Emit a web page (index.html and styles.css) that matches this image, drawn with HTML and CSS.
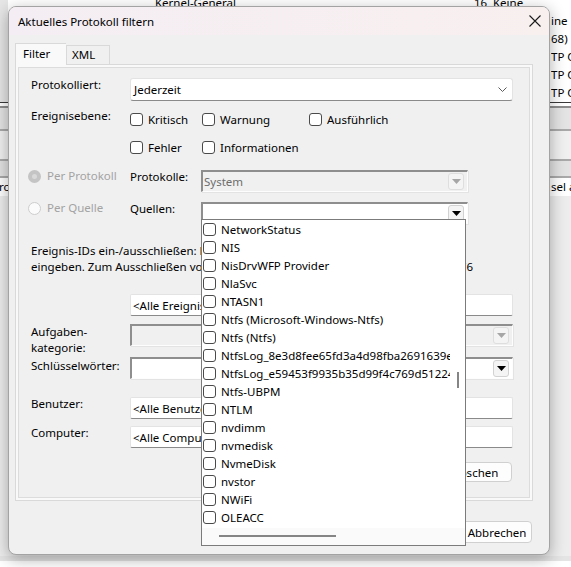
FILE: index.html
```html
<!DOCTYPE html>
<html lang="de">

<head>
    <meta charset="UTF-8" />
    <title>Aktuelles Protokoll filtern</title>
    <link rel="stylesheet" href="styles.css">
</head>

<body>
    <!-- Event viewer window behind the dialog -->
    <div class="backdrop">
        <div class="bg-events">
            <div class="bg-row"><span class="lead"></span><span>Kernel-General</span><span>16</span><span>Keine</span><span></span></div>
            <div class="bg-row"><span class="lead"></span><span></span><span></span><span></span><span>ine</span></div>
            <div class="bg-row"><span class="lead"></span><span></span><span></span><span></span><span>68)</span></div>
            <div class="bg-row"><span class="lead"></span><span></span><span></span><span></span><span>TP C</span></div>
            <div class="bg-row"><span class="lead"></span><span></span><span></span><span></span><span>TP C</span></div>
            <div class="bg-row focus"><span class="lead"></span><span></span><span></span><span></span><span>TP C</span></div>
        </div>
        <div class="bg-split"></div>
        <div class="bg-band one"></div>
        <div class="bg-band two"></div>
        <div class="bg-band three"></div>
        <div class="bg-details">
            <div class="bg-row"><span class="lead">rc</span><span></span><span></span><span></span><span>sel a</span></div>
        </div>
    </div>

    <div class="dialog">
        <div class="titlebar">
            <span>Aktuelles Protokoll filtern</span>
            <svg class="close" width="12" height="12" viewBox="0 0 12 12">
                <path d="M0.5 0.5 L11.5 11.5 M11.5 0.5 L0.5 11.5" stroke="#1b1b1b" stroke-width="1.1" fill="none" />
            </svg>
        </div>

        <div class="dialog-body">
            <div class="tabs">
                <div class="tab active">Filter</div>
                <div class="tab">XML</div>
            </div>

            <div class="panel">
                <div class="panel-inner">

                    <div class="row r-logged">
                        <div class="lbl">Protokolliert:</div>
                        <div class="select">
                            <span>Jederzeit</span>
                            <svg width="9" height="5" viewBox="0 0 9 5">
                                <polyline points="0.5,0.5 4.5,4.5 8.5,0.5" stroke="#5a5a5a" fill="none" />
                            </svg>
                        </div>
                    </div>

                    <div class="row r-levels">
                        <div class="lbl">Ereignisebene:</div>
                        <div class="levels">
                            <label class="chk"><span class="box"></span>Kritisch</label>
                            <label class="chk"><span class="box"></span>Warnung</label>
                            <label class="chk"><span class="box"></span>Ausführlich</label>
                            <label class="chk"><span class="box"></span>Fehler</label>
                            <label class="chk"><span class="box"></span>Informationen</label>
                        </div>
                    </div>

                    <div class="row r-log">
                        <div class="opt disabled"><span class="radio on"></span>Per Protokoll</div>
                        <div class="lbl2">Protokolle:</div>
                        <div class="combo off">
                            <span>System</span>
                            <span class="drop"><svg width="9" height="5" viewBox="0 0 9 5"><polygon points="0,0 9,0 4.5,5" fill="#a6a6a6" /></svg></span>
                        </div>
                    </div>

                    <div class="row r-src">
                        <div class="opt disabled"><span class="radio"></span>Per Quelle</div>
                        <div class="lbl2">Quellen:</div>
                        <div class="combo">
                            <span></span>
                            <span class="drop"><svg width="9" height="5" viewBox="0 0 9 5"><polygon points="0,0 9,0 4.5,5" fill="#000" /></svg></span>

                            <!-- open source list -->
                            <div class="dropdown">
                                <div class="dd-items">
                                    <div class="dd-item"><span class="box"></span>NetworkStatus</div>
                                    <div class="dd-item"><span class="box"></span>NIS</div>
                                    <div class="dd-item"><span class="box"></span>NisDrvWFP Provider</div>
                                    <div class="dd-item"><span class="box"></span>NlaSvc</div>
                                    <div class="dd-item"><span class="box"></span>NTASN1</div>
                                    <div class="dd-item"><span class="box"></span>Ntfs (Microsoft-Windows-Ntfs)</div>
                                    <div class="dd-item"><span class="box"></span>Ntfs (Ntfs)</div>
                                    <div class="dd-item"><span class="box"></span>NtfsLog_8e3d8fee65fd3a4d98fba2691639e67c</div>
                                    <div class="dd-item"><span class="box"></span>NtfsLog_e59453f9935b35d99f4c769d51224af1</div>
                                    <div class="dd-item"><span class="box"></span>Ntfs-UBPM</div>
                                    <div class="dd-item"><span class="box"></span>NTLM</div>
                                    <div class="dd-item"><span class="box"></span>nvdimm</div>
                                    <div class="dd-item"><span class="box"></span>nvmedisk</div>
                                    <div class="dd-item"><span class="box"></span>NvmeDisk</div>
                                    <div class="dd-item"><span class="box"></span>nvstor</div>
                                    <div class="dd-item"><span class="box"></span>NWiFi</div>
                                    <div class="dd-item"><span class="box"></span>OLEACC</div>
                                </div>
                                <div class="vscroll"><div class="thumb"></div></div>
                                <div class="hscroll"><div class="thumb"></div></div>
                            </div>
                        </div>
                    </div>

                    <div class="hint">
                        <div class="hint-line">Ereignis-IDs ein-/ausschließen: Durch Kommas getrennte ID-Nummern und/oder ID-Bereiche</div>
                        <div class="hint-line split"><span class="cut">eingeben. Zum Ausschließen von Kriterien zuerst ein Minuszeichen eingeben. Beispiel: 1,3,5-99,</span><span>-76</span></div>
                    </div>

                    <div class="row r-ids">
                        <div class="lbl"></div>
                        <div class="input">&lt;Alle Ereignis-IDs&gt;</div>
                    </div>

                    <div class="row r-task">
                        <div class="lbl tight">Aufgaben-<br>kategorie:</div>
                        <div class="combo off wide">
                            <span></span>
                            <span class="drop"><svg width="9" height="5" viewBox="0 0 9 5"><polygon points="0,0 9,0 4.5,5" fill="#a6a6a6" /></svg></span>
                        </div>
                    </div>

                    <div class="row r-keys">
                        <div class="lbl">Schlüsselwörter:</div>
                        <div class="combo wide">
                            <span></span>
                            <span class="drop"><svg width="9" height="5" viewBox="0 0 9 5"><polygon points="0,0 9,0 4.5,5" fill="#000" /></svg></span>
                        </div>
                    </div>

                    <div class="row r-user">
                        <div class="lbl">Benutzer:</div>
                        <div class="input">&lt;Alle Benutzer&gt;</div>
                    </div>

                    <div class="row r-comp">
                        <div class="lbl">Computer:</div>
                        <div class="input">&lt;Alle Computer&gt;</div>
                    </div>

                    <div class="row r-clear">
                        <button class="btn">Löschen</button>
                    </div>

                </div>
            </div>

            <div class="actions">
                <button class="btn">OK</button>
                <button class="btn">Abbrechen</button>
            </div>
        </div>
    </div>
</body>

</html>
```

FILE: styles.css
```css
* {
    box-sizing: border-box;
}

body {
    margin: 0;
    width: 571px;
    height: 567px;
    overflow: hidden;
    position: relative;
    background-color: #ffffff;
    color: #000;
    font-family: "Noto Sans", sans-serif;
    font-size: 11.5px;
}

/* ---------- background window ---------- */

.backdrop {
    height: 567px;
    background-color: #e4e4e4;
}

.bg-events {
    margin-top: -6px;
    background-color: #fff;
}

.bg-row {
    display: grid;
    grid-template-columns: 155px 319px 16px 61px 20px;
    height: 18px;
    line-height: 18px;
    white-space: nowrap;
    overflow: hidden;
}

.bg-row span {
    overflow: hidden;
}

.bg-events .lead {
    background: linear-gradient(90deg, #e6e6e6 0 9px, transparent 9px);
}

.bg-events .bg-row:first-child span:nth-child(4) {
    padding-left: 3px;
}

.bg-row.focus {
    height: 19px;
    border-bottom: 1px solid #3a3a3a;
}

.bg-row .lead {
    margin-left: -1px;
}

.bg-split {
    height: 5px;
    background-color: #fff;
    border-bottom: 2px solid #8d8d8d;
}

.bg-band {
    border-bottom: 2px solid #a9a9a9;
}

.bg-band.one {
    height: 23px;
    background-color: #e4e4e4;
}

.bg-band.two {
    height: 30px;
    background-color: #f0f0f0;
}

.bg-band.three {
    height: 17px;
    background-color: #e2e2e2;
}

.bg-details {
    height: 378px;
    background: linear-gradient(#fff 0 18px, #ededed 18px);
}

/* ---------- dialog ---------- */

.dialog {
    position: absolute;
    left: 8px;
    top: 6px;
    width: 542px;
    height: 549px;
    background-color: #f0f0f0;
    border: 1px solid #a3a3a3;
    border-radius: 8px;
    box-shadow: 0 4px 16px rgba(0, 0, 0, 0.32);
    overflow: hidden;
    display: flex;
    flex-direction: column;
}

.titlebar {
    height: 28px;
    flex: none;
    display: flex;
    align-items: center;
    justify-content: space-between;
    padding: 0 8px 0 9px;
    background: linear-gradient(90deg, #f4edf3, #f8f0ef);
}

.dialog-body {
    flex: 1;
    padding: 8px 0 0 6px;
}

.tabs {
    display: flex;
    align-items: flex-end;
    height: 21px;
    position: relative;
    z-index: 1;
}

.tab {
    width: 44px;
    height: 19px;
    padding-left: 5px;
    line-height: 18px;
    border: 1px solid #d9d9d9;
    border-bottom: none;
    background-color: #f0f0f0;
}

.tab.active {
    width: 51px;
    height: 22px;
    margin-bottom: -1px;
    padding-left: 7px;
    line-height: 20px;
    background-color: #f9f9f9;
    border-right: none;
}

.panel {
    width: 518px;
    height: 437px;
    padding: 2px;
    background-color: #f9f9f9;
    border: 1px solid #d9d9d9;
}

.panel-inner {
    height: 100%;
    padding: 10px 16px 0 12px;
    border: 1px solid #dcdcdc;
    background-color: #f0f0f0;
}

.row {
    display: flex;
    align-items: flex-start;
}

.lbl {
    width: 99px;
    flex: none;
    line-height: 16px;
    margin-top: -1px;
}

.lbl.tight {
    height: 22px;
    line-height: 15.5px;
    margin-top: 0;
}

.lbl2 {
    width: 71px;
    flex: none;
    line-height: 16px;
    margin-top: -1px;
}

/* modern dropdown / text boxes */
.select,
.input {
    flex: 1;
    height: 23px;
    display: flex;
    align-items: center;
    justify-content: space-between;
    padding: 0 5px 0 3px;
    background-color: #fff;
    border: 1px solid #e3e3e3;
    border-bottom-color: #8a8a8a;
    border-radius: 3px;
    white-space: nowrap;
}

.input {
    height: 22px;
    padding-left: 2px;
    border-radius: 2px;
}

.levels {
    display: grid;
    grid-template-columns: 72px 107px auto;
    row-gap: 12px;
}

.chk {
    display: flex;
    align-items: center;
    gap: 5px;
    height: 16px;
}

.box {
    width: 13px;
    height: 13px;
    flex: none;
    background-color: #fff;
    border: 1px solid #4a4a4a;
    border-radius: 3px;
}

.opt {
    width: 99px;
    flex: none;
    display: flex;
    align-items: center;
    gap: 6px;
    margin-left: -3px;
    margin-right: 3px;
    line-height: 16px;
    margin-top: -2px;
}

.opt.disabled {
    color: #a3a3a3;
}

.radio {
    width: 13px;
    height: 13px;
    flex: none;
    border-radius: 50%;
    background-color: #fbfbfb;
    border: 1px solid #cdcdcd;
}

.radio.on {
    border: 4px solid #c4c4c4;
    background-color: #d9d9d9;
}

/* classic sunken combo boxes */
.combo {
    position: relative;
    width: 267px;
    height: 22px;
    display: flex;
    align-items: center;
    justify-content: space-between;
    padding: 0 3px 0 1px;
    background-color: #fff;
    border-top: 2px solid #8e8e8e;
    border-left: 2px solid #8e8e8e;
    border-right: 1px solid #fdfdfd;
    border-bottom: 1px solid #fdfdfd;
    box-shadow: 1px 1px 0 #e3e3e3;
}

.combo.off {
    background-color: #f0f0f0;
    color: #6d6d6d;
}

.combo.wide {
    flex: 1;
}

.drop {
    width: 16px;
    height: 17px;
    display: flex;
    align-items: center;
    justify-content: center;
    background-color: #f4f4f4;
    border: 1px solid #d2d2d2;
    border-radius: 3px;
}

.combo.off .drop {
    border-color: #dedede;
}

.r-logged {
    margin-top: 0;
}

.r-levels {
    margin-top: 10px;
}

.r-levels .lbl {
    margin-top: -3px;
}

.r-log {
    margin-top: 15px;
}

.r-src {
    margin-top: 10px;
}

.hint {
    margin-top: 19px;
    width: 442px;
    line-height: 16px;
    white-space: nowrap;
}

.hint-line {
    max-width: 433px;
    overflow: hidden;
}

.hint-line.split {
    display: flex;
    max-width: 442px;
}

.hint-line .cut {
    flex: 1;
    min-width: 0;
    overflow: hidden;
}

.r-ids {
    margin-top: 19px;
}

.r-task {
    margin-top: 8px;
}

.r-keys {
    margin-top: 11px;
}

.r-keys .lbl {
    margin-top: 1px;
}

.r-user {
    margin-top: 18px;
}

.r-comp {
    margin-top: 7px;
}

.r-clear {
    margin-top: 14px;
    justify-content: flex-end;
    padding-right: 1px;
}

.btn {
    width: 72px;
    height: 20px;
    padding: 0;
    font: inherit;
    color: #000;
    background-color: #fdfdfd;
    border: 1px solid #d0d0d0;
    border-radius: 4px;
}

.actions {
    display: flex;
    justify-content: flex-end;
    gap: 7px;
    margin-top: 20px;
    padding-right: 17px;
}

.actions .btn {
    width: 70px;
    height: 22px;
}

/* ---------- open "Quellen" list ---------- */

.dropdown {
    position: absolute;
    left: -2px;
    top: 15px;
    width: 265px;
    height: 327px;
    z-index: 5;
    display: grid;
    grid-template-columns: 1fr 15px;
    grid-template-rows: 1fr 17px;
    background-color: #fff;
    border: 1px solid #7b7b7b;
    color: #000;
}

.dd-items {
    overflow: hidden;
    padding-left: 1px;
}

.dd-item {
    display: flex;
    align-items: center;
    gap: 5px;
    height: 18px;
    white-space: nowrap;
}

.vscroll {
    position: relative;
    background-color: #fff;
}

.vscroll .thumb {
    position: absolute;
    left: 7px;
    top: 152px;
    width: 2px;
    height: 16px;
    background-color: #858585;
}

.hscroll {
    grid-column: 1 / span 2;
    position: relative;
    background-color: #fafafa;
}

.hscroll .thumb {
    position: absolute;
    left: 17px;
    top: 7px;
    width: 117px;
    height: 2px;
    background-color: #858585;
}
```
